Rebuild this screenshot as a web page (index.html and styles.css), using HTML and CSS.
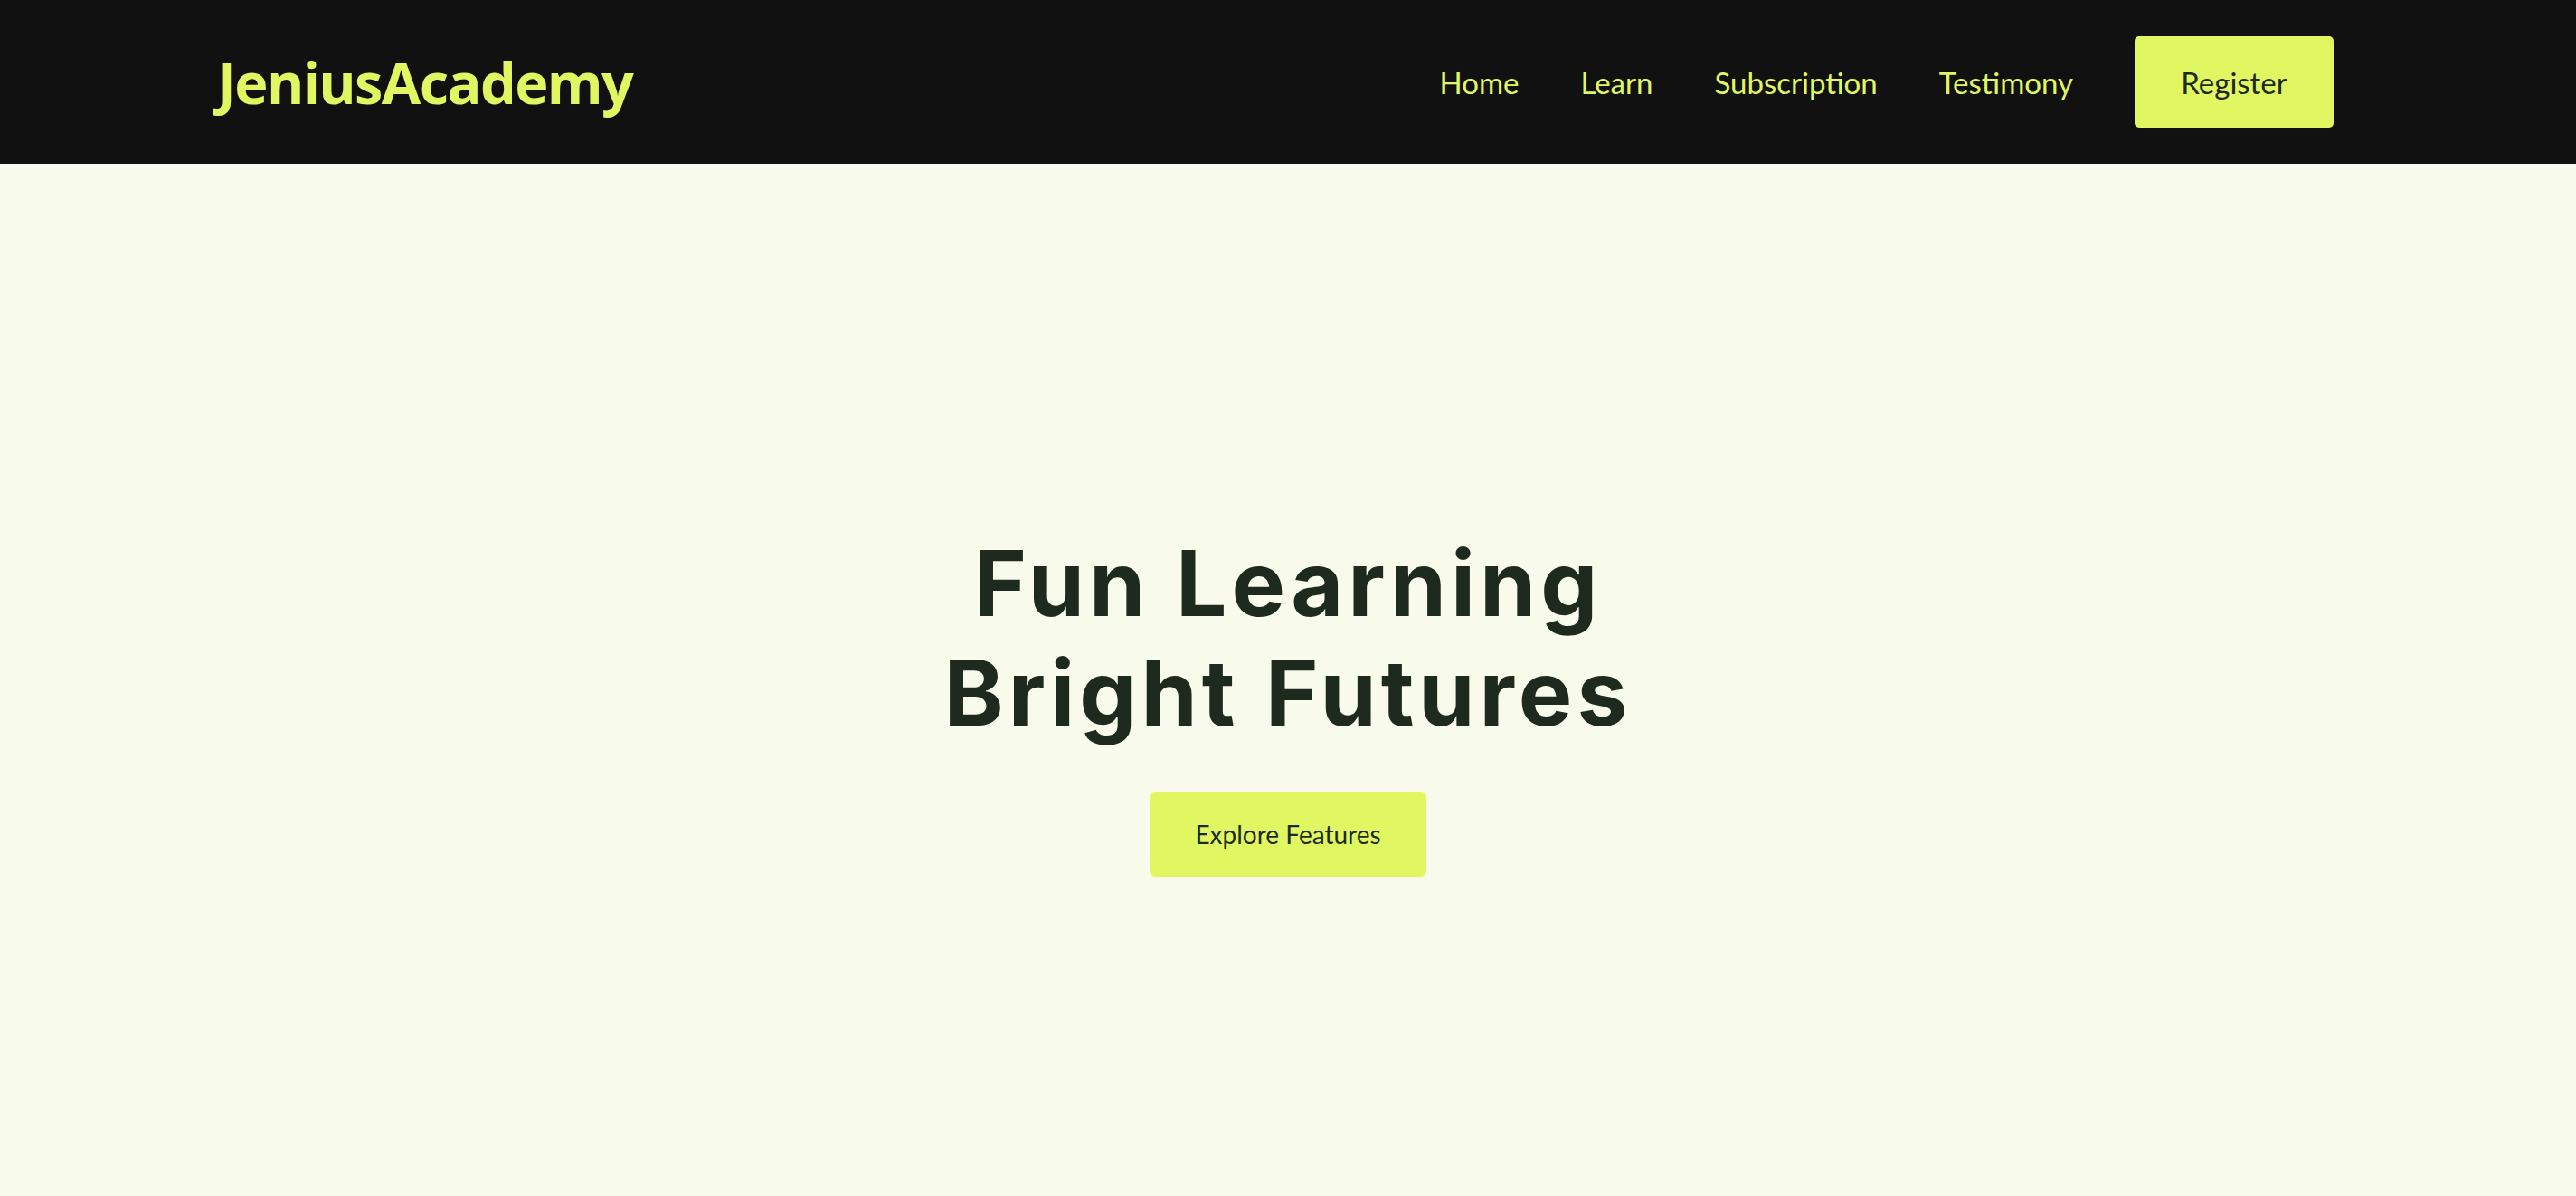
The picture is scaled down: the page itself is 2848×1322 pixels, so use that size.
FILE: index.html
```html
<!DOCTYPE html>
<html lang="en">
<head>
<meta charset="utf-8">
<title>JeniusAcademy</title>
<link rel="stylesheet" href="styles.css">
</head>
<body>
<header class="site-header">
  <div class="logo">JeniusAcademy</div>
  <nav class="nav">
    <a class="nav-link" href="#">Home</a>
    <a class="nav-link" href="#">Learn</a>
    <a class="nav-link" href="#">Subscription</a>
    <a class="nav-link" href="#">Testimony</a>
    <a class="btn-register" href="#">Register</a>
  </nav>
</header>
<main class="hero">
  <h1 class="hero-title">Fun Learning<br>Bright Futures</h1>
  <a class="btn-explore" href="#">Explore Features</a>
</main>
</body>
</html>
```

FILE: styles.css
```css
* { box-sizing: border-box; }
html, body { margin: 0; padding: 0; }
body {
  background: #f8fbec;
  font-family: "Lato", "Liberation Sans", sans-serif;
}
a { text-decoration: none; }

.site-header {
  height: 181px;
  background: #111111;
  display: flex;
  align-items: center;
  justify-content: space-between;
  padding: 0 268px 0 240px;
}
.logo {
  font-family: "Open Sans", "Noto Sans", sans-serif;
  font-weight: 700;
  font-size: 63px;
  color: #e0f762;
  letter-spacing: -1.6px;
}
.nav {
  display: flex;
  align-items: center;
  gap: 68px;
}
.nav-link {
  color: #e0f762;
  font-size: 33px;
}
.btn-register {
  display: flex;
  align-items: center;
  justify-content: center;
  width: 220px;
  height: 101px;
  background: #e0f762;
  color: #1f2a1e;
  font-size: 33px;
  border-radius: 5px;
}

.hero {
  min-height: 1141px;
  display: flex;
  flex-direction: column;
  align-items: center;
  padding-top: 403px;
}
.hero-title {
  margin: 0;
  text-align: center;
  font-family: "Inter", "Liberation Sans", sans-serif;
  font-weight: 700;
  font-size: 100px;
  line-height: 121px;
  letter-spacing: 5px;
  color: #1f2a1e;
}
.btn-explore {
  margin-top: 49px;
  display: flex;
  align-items: center;
  justify-content: center;
  width: 306px;
  height: 94px;
  background: #e0f762;
  color: #1f2a1e;
  font-size: 28px;
  border-radius: 6px;
}
```
